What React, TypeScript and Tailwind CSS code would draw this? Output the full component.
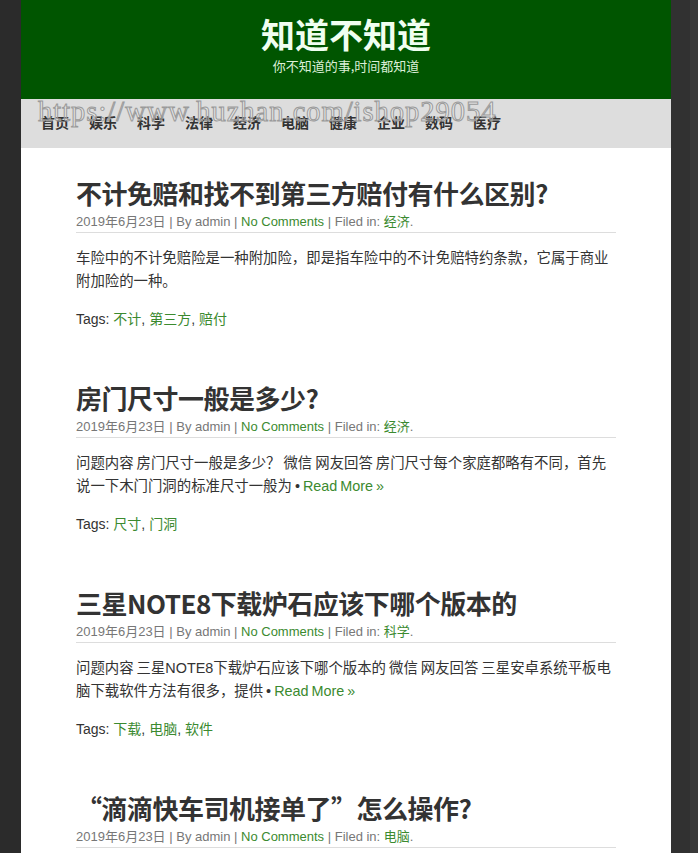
import React from 'react';

type Post = {
    title: string;
    category: string;
    body: string;
    readMore: boolean;
    tags: string[];
};

const posts: Post[] = [
    {
        title: '不计免赔和找不到第三方赔付有什么区别?',
        category: '经济',
        body: '车险中的不计免赔险是一种附加险，即是指车险中的不计免赔特约条款，它属于商业附加险的一种。',
        readMore: false,
        tags: ['不计', '第三方', '赔付'],
    },
    {
        title: '房门尺寸一般是多少?',
        category: '经济',
        body: '问题内容 房门尺寸一般是多少？ 微信 网友回答 房门尺寸每个家庭都略有不同，首先说一下木门门洞的标准尺寸一般为',
        readMore: true,
        tags: ['尺寸', '门洞'],
    },
    {
        title: '三星NOTE8下载炉石应该下哪个版本的',
        category: '科学',
        body: '问题内容 三星NOTE8下载炉石应该下哪个版本的 微信 网友回答 三星安卓系统平板电脑下载软件方法有很多，提供',
        readMore: true,
        tags: ['下载', '电脑', '软件'],
    },
    {
        title: '“滴滴快车司机接单了”怎么操作?',
        category: '电脑',
        body: '',
        readMore: false,
        tags: [],
    },
];

const navItems = ['首页', '娱乐', '科学', '法律', '经济', '电脑', '健康', '企业', '数码', '医疗'];

const font = "font-['Liberation_Sans','Noto_Sans_CJK_SC',sans-serif]";

const PostItem: React.FC<{ post: Post }> = ({ post }) => (
    <article className="mb-[53px]">
        <h2 className="text-[26px] leading-[32px] font-bold text-[#333] font-['Noto_Sans_CJK_SC',sans-serif] tracking-[-0.5px]">
            {post.title}
        </h2>
        <div className="mt-[3px] text-[13px] leading-[20px] text-[#777] border-b border-[#ddd]">
            2019年6月23日 | By admin | <span className="text-[#3b8a2f]">No Comments</span> | Filed in:{' '}
            <span className="text-[#3b8a2f]">{post.category}</span>.
        </div>
        {post.body && (
            <p className="mt-[14px] text-[14.4px] leading-[23px] text-[#333] [word-spacing:-1px]">
                {post.body}
                {post.readMore && (
                    <>
                        {' '}• <span className="text-[#3b8a2f]">Read More »</span>
                    </>
                )}
            </p>
        )}
        {post.tags.length > 0 && (
            <div className="mt-[16px] text-[14px] leading-[20px] text-[#333]">
                Tags:{' '}
                {post.tags.map((t, i) => (
                    <React.Fragment key={t}>
                        <span className="text-[#3b8a2f]">{t}</span>
                        {i < post.tags.length - 1 ? ', ' : ''}
                    </React.Fragment>
                ))}
            </div>
        )}
    </article>
);

const App: React.FC = () => {
    return (
        <div className={`h-[853px] overflow-hidden bg-[#2f2f2f] flex ${font}`}>
            <div className="w-[21px] shrink-0 bg-[#2b2b2b]" />
            <div className="w-[650px] shrink-0 flex flex-col">
                <header className="shrink-0 bg-[#005500] h-[99px] flex flex-col items-center pt-[12px]">
                    <h1 className="text-[34px] leading-[44px] font-bold text-[#f0fff0] font-['Noto_Sans_CJK_SC',sans-serif]">
                        知道不知道
                    </h1>
                    <p className="mt-[1px] text-[13px] leading-[18px] text-[#dcefd8] font-['Noto_Sans_CJK_SC',sans-serif]">
                        你不知道的事,时间都知道
                    </p>
                </header>
                <nav className="shrink-0 relative bg-[#dddddd] h-[49px] flex items-center gap-[20px] pl-[20px] pb-[3px]">
                    {navItems.map(item => (
                        <span key={item} className="text-[14px] font-bold text-[#333] font-['Noto_Sans_CJK_SC',sans-serif]">
                            {item}
                        </span>
                    ))}
                    <span className="absolute left-[17px] top-[-5px] text-[28.5px] leading-[36px] font-['Liberation_Serif',serif] text-white/30 [-webkit-text-stroke:1px_#9a9a9a] tracking-[1px] pointer-events-none whitespace-nowrap">
                        https://www.huzhan.com/ishop29054
                    </span>
                </nav>
                <main className="bg-white flex-1 pl-[55px] pr-[55px] pt-[29px]">
                    {posts.map(p => (
                        <PostItem key={p.title} post={p} />
                    ))}
                </main>
            </div>
            <div className="flex-1 bg-[#313131] flex justify-end">
                <div className="w-[8px] bg-[#3a3a3a]" />
            </div>
        </div>
    );
};

export default App;
